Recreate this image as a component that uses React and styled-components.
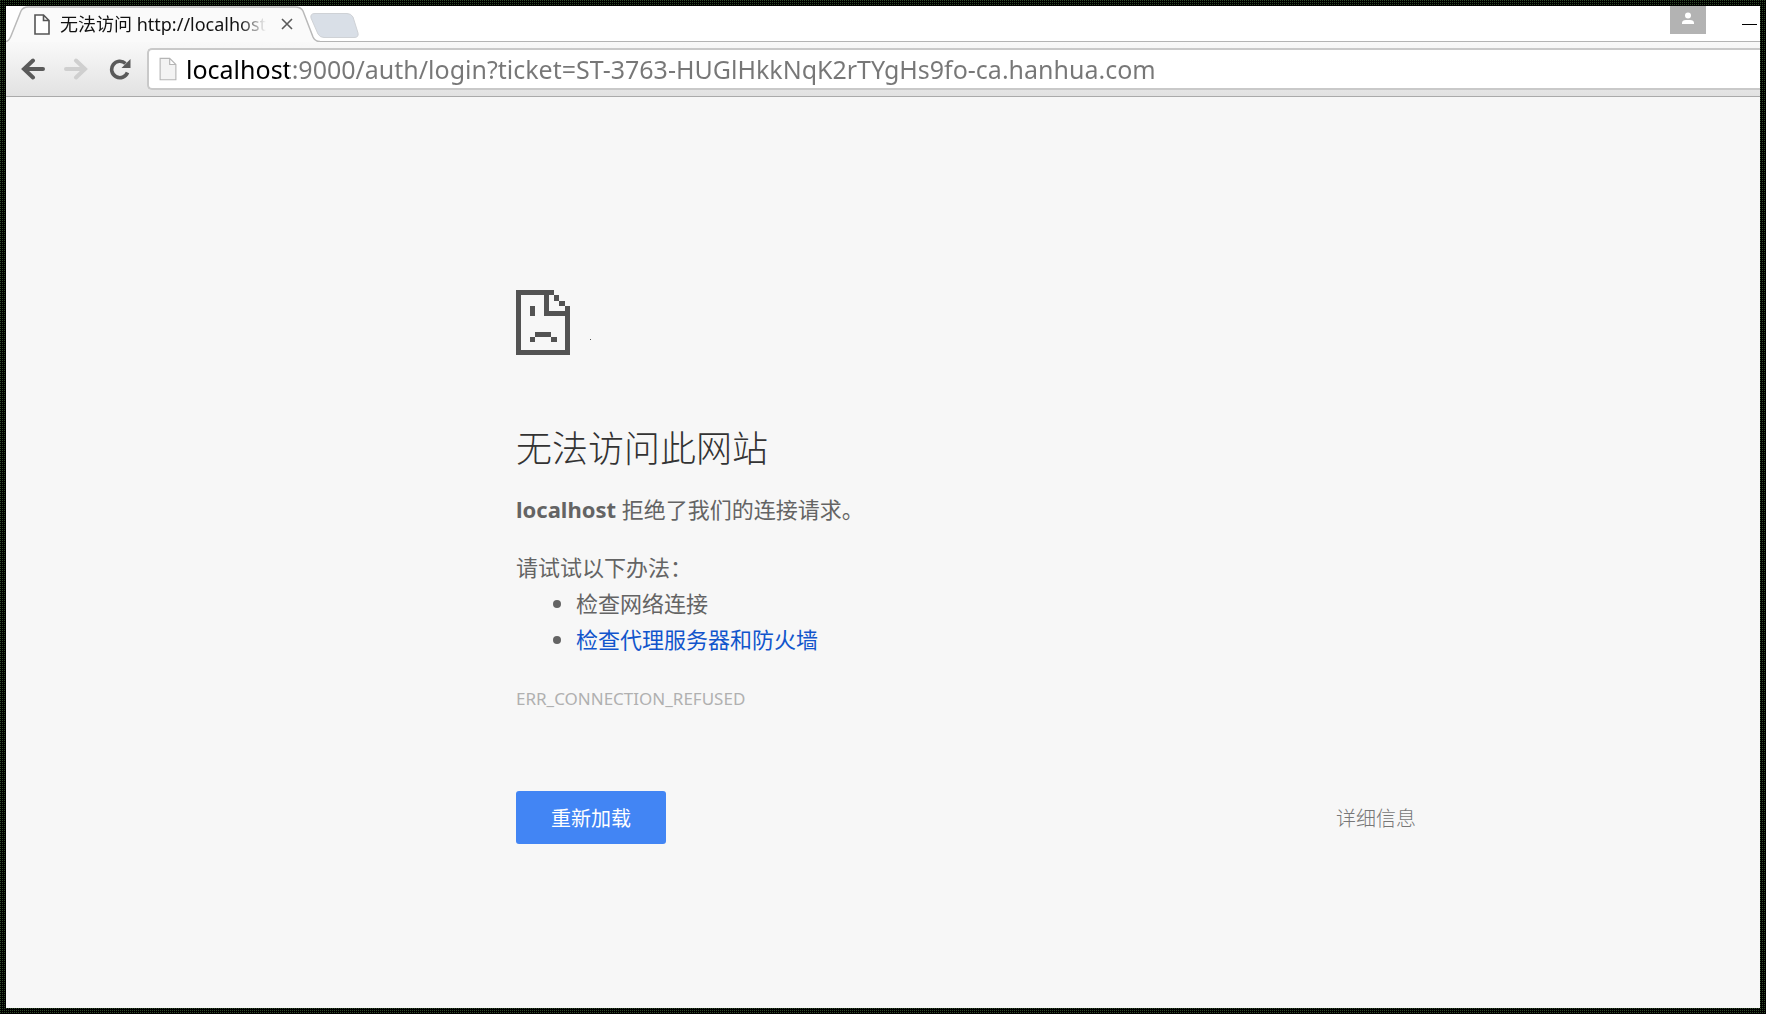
import React from 'react'
import styled, {createGlobalStyle} from 'styled-components'


const GlobalStyle = createGlobalStyle`
:root {
  --ui-font: 'Noto Sans', 'Noto Sans CJK SC', sans-serif;
  --button-font: 'Liberation Serif', 'Noto Sans CJK SC', serif;
  --page-background: #f7f7f7;
  --text: #646464;
}
* {
  box-sizing: border-box;
}
body {
  margin: 0;
  font-family: var(--ui-font);
}
`;

const Frame = styled.div`
min-height: 100vh;
padding: 6px;
display: flex;
background-color: #2f4a28;
background-image: linear-gradient(transparent 1px, #000 1px), linear-gradient(90deg, transparent 1px, #000 1px);
background-size: 2px 2px;
`;

const Window = styled.div`
flex: 1;
min-width: 0;
display: flex;
flex-direction: column;
overflow: hidden;
background-color: var(--page-background);
`;

const TabStrip = styled.div`
position: relative;
display: flex;
align-items: flex-start;
height: 36px;
background-color: #fff;
box-shadow: inset 0 -1px 0 #b4b4b4;
`;

const Tab = styled.div`
position: relative;
display: flex;
align-items: center;
width: 310px;
height: 36px;
padding: 0 16px 0 28px;
`;

const TabShape = styled.svg`
position: absolute;
left: 0;
top: 0;
`;

const TabTitle = styled.div`
position: relative;
width: 214px;
margin-left: 10px;
white-space: nowrap;
font-size: 18px;
line-height: 24px;
color: #111;
mask-image: linear-gradient(90deg, #000 180px, transparent 206px);
`;

const IconButton = styled.button`
position: relative;
display: flex;
align-items: center;
justify-content: center;
flex: none;
width: ${props => props.$width}px;
height: ${props => props.$height}px;
padding: 0;
border: 0;
background: ${props => props.$background || 'transparent'};
color: ${props => props.$color || '#5a5a5a'};
`;

const Controls = styled.div`
display: flex;
align-items: flex-start;
gap: 32px;
margin-left: auto;
`;

const Toolbar = styled.div`
display: flex;
align-items: center;
height: 55px;
padding-left: 8px;
background: linear-gradient(#f9f9f9, #e2e2e2);
border-bottom: 1px solid #aaa;
`;

const AddressBar = styled.label`
display: flex;
align-items: center;
flex: 1;
height: 42px;
margin-left: 7px;
padding-left: 10px;
background-color: #fff;
border: 2px solid #c9c9c9;
border-right: 0;
border-radius: 5px 0 0 5px;
`;

const AddressInput = styled.input`
flex: 1;
min-width: 0;
height: 36px;
margin-left: 9px;
padding: 0;
border: 0;
outline: 0;
font-family: var(--ui-font);
font-size: 25px;
color: #777;
background: linear-gradient(90deg, #000 103px, #777 103px);
background-clip: text;
-webkit-text-fill-color: transparent;
`;

const Page = styled.main`
width: 100%;
max-width: 1410px;
padding: 193px 0 0 510px;
color: var(--text);
font-size: 22px;
line-height: 36px;
`;

const ErrorIcon = styled.svg`
display: block;
`;

const Title = styled.h1`
margin: 67px 0 15px;
font-size: 36px;
font-weight: 300;
line-height: 54px;
color: #333;
`;

const Text = styled.p`
margin: 0 0 ${props => props.$gap || 0}px;
`;

const Suggestions = styled.ul`
margin: 0 0 30px;
padding-left: 60px;
`;

const Link = styled.a`
color: #1155cc;
text-decoration: none;
`;

const ErrorCode = styled.div`
font-size: 17px;
line-height: 24px;
color: #b0b0b0;
`;

const Buttons = styled.div`
display: flex;
justify-content: space-between;
margin-top: 80px;
`;

const Button = styled.button`
height: 53px;
padding: 0 ${props => props.$primary ? 35 : 0}px;
border: 0;
border-radius: 3px;
font-family: var(--button-font);
font-size: 20px;
font-weight: ${props => props.$primary ? 400 : 300};
color: ${props => props.$primary ? '#fff' : '#777'};
background: ${props => props.$primary ? '#4285f4' : 'transparent'};
`;

const PageIcon = styled.svg`
position: relative;
flex: none;
`;


const FileIcon = ({width, height, stroke, strokeWidth, fill}) => (
    <PageIcon width={width} height={height} viewBox="0 0 16 21">
        <path d="M1 1h8.5L15 6.5V20H1zM9.5 1v5.5H15" fill={fill} stroke={stroke} strokeWidth={strokeWidth} />
    </PageIcon>
)

const SadPage = () => (
    <ErrorIcon width="76" height="65" viewBox="0 0 28.1 24" preserveAspectRatio="none" shapeRendering="crispEdges" fill="#535353">
        <path d="M0 0h14v2H2v20h16V6h2v18H0z" />
        <path d="M14 2h2v2h-2zM16 4h2v2h-2z" />
        <path d="M10.300 0h2v7.700H20v1.900h-9.700z" />
        <path d="M5 5.800h2v3.800H5zM7 15.400h6v1.900H7zM5 17.300h2v1.900H5zM13 17.300h2v1.900h-2z" />
        <path d="M27.400 18.100h.4v.4h-.4z" />
    </ErrorIcon>
)

const App = () => {
    return (
        <Frame>
            <GlobalStyle />
            <Window>
                <TabStrip>
                    <Tab>
                        <TabShape width="360" height="36" viewBox="0 0 360 36">
                            <path d="M0 36Q3 35 5 30L15 5Q17 1 22 1H289Q295 1 297 5L307 31Q309 36 314 36z" fill="#fafafa" />
                            <path d="M0 35.500Q3 35 5 30L15 5Q17 1 22 1H289Q295 1 297 5L307 31Q309 35.500 314 35.500" fill="none" stroke="#b9b9b9" strokeWidth="1.500" />
                            <path d="M309 7.500H341Q345 7.500 347 11L352 27Q353 31.500 348 31.500H318Q314 31.500 312 28L305 12Q304 7.500 309 7.500z" fill="#d9dfe7" stroke="#cfd2d6" />
                        </TabShape>
                        <FileIcon width={16} height={21} stroke="#555" strokeWidth={1.6} fill="#fff" />
                        <TabTitle>无法访问 http://localhost</TabTitle>
                        <IconButton $width={26} $height={24} aria-label="关闭标签页">
                            <svg width="12" height="12" viewBox="0 0 12 12">
                                <path d="M1 1l10 10M11 1L1 11" stroke="currentColor" strokeWidth="1.600" />
                            </svg>
                        </IconButton>
                    </Tab>
                    <Controls>
                        <IconButton $width={36} $height={28} $background="#b3b3b3" $color="#fff" aria-label="用户">
                            <svg width="12" height="16" viewBox="0 0 12 16" fill="currentColor">
                                <circle cx="6" cy="3.500" r="3" />
                                <path d="M0 12V11Q0 8 4 8H8Q12 8 12 11V12z" />
                            </svg>
                        </IconButton>
                        <IconButton $width={22} $height={36} $color="#000" aria-label="最小化">
                            <svg width="16" height="1" viewBox="0 0 16 1"><path d="M1 .5h15" stroke="currentColor" /></svg>
                        </IconButton>
                    </Controls>
                </TabStrip>
                <Toolbar>
                    <IconButton $width={38} $height={36} aria-label="后退">
                        <svg width="24" height="22" viewBox="0 0 24 22" fill="none" stroke="currentColor" strokeWidth="4" strokeLinecap="round">
                            <path d="M22 11H4M12 2.500L3 11l9 8.500" />
                        </svg>
                    </IconButton>
                    <IconButton $width={48} $height={36} $color="#cfcfcf" aria-label="前进">
                        <svg width="24" height="22" viewBox="0 0 24 22" fill="none" stroke="currentColor" strokeWidth="4" strokeLinecap="round">
                            <path d="M2 11h18M12 2.500L21 11l-9 8.500" />
                        </svg>
                    </IconButton>
                    <IconButton $width={40} $height={36} aria-label="重新加载此页">
                        <svg width="22" height="22" viewBox="0 0 22 22">
                            <path d="M18.500 14.500A8.200 8.200 0 1 1 16.500 5.500" fill="none" stroke="currentColor" strokeWidth="3.600" />
                            <path d="M21.500 1v9h-9z" fill="currentColor" />
                        </svg>
                    </IconButton>
                    <AddressBar>
                        <FileIcon width={18} height={24} stroke="#b5b5b5" strokeWidth={1} fill="#f3f3f3" />
                        <AddressInput
                            aria-label="地址"
                            defaultValue="localhost:9000/auth/login?ticket=ST-3763-HUGlHkkNqK2rTYgHs9fo-ca.hanhua.com"
                        />
                    </AddressBar>
                </Toolbar>
                <Page>
                    <SadPage />
                    <Title>无法访问此网站</Title>
                    <Text $gap={22}><strong>localhost</strong> 拒绝了我们的连接请求。</Text>
                    <Text>请试试以下办法：</Text>
                    <Suggestions>
                        <li>检查网络连接</li>
                        <li><Link href="#proxy">检查代理服务器和防火墙</Link></li>
                    </Suggestions>
                    <ErrorCode>ERR_CONNECTION_REFUSED</ErrorCode>
                    <Buttons>
                        <Button $primary>重新加载</Button>
                        <Button>详细信息</Button>
                    </Buttons>
                </Page>
            </Window>
        </Frame>
    )
}

export default App
